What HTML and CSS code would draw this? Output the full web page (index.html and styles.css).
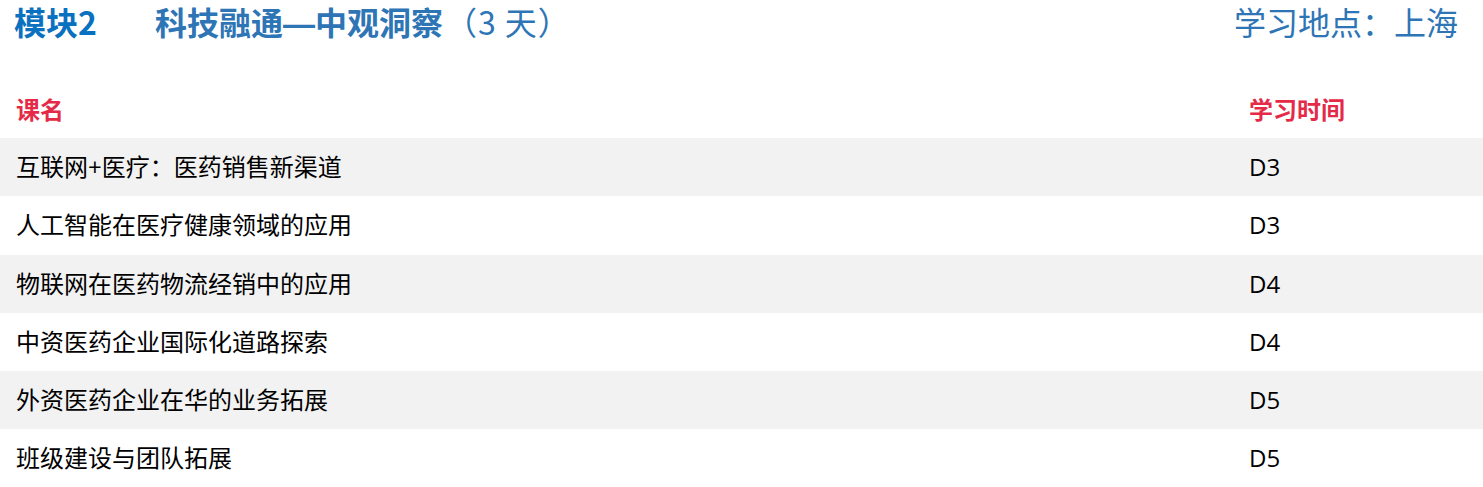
FILE: index.html
```html
<!DOCTYPE html>
<html lang="zh-CN">
<head>
<meta charset="utf-8">
<title>模块2 科技融通—中观洞察</title>
<link rel="stylesheet" href="styles.css">
</head>
<body>
<div class="page">
  <header class="title-bar">
    <div class="title-left">
      <span class="module">模块2</span>
      <span class="topic">科技融通<span class="dash">—</span>中观洞察<span class="days">（3 天）</span></span>
    </div>
    <div class="place">学习地点：上海</div>
  </header>
  <div class="table">
    <div class="row head">
      <div class="cell">课名</div>
      <div class="cell">学习时间</div>
    </div>
    <div class="row alt">
      <div class="cell">互联网+医疗：医药销售新渠道</div>
      <div class="cell">D3</div>
    </div>
    <div class="row">
      <div class="cell">人工智能在医疗健康领域的应用</div>
      <div class="cell">D3</div>
    </div>
    <div class="row alt">
      <div class="cell">物联网在医药物流经销中的应用</div>
      <div class="cell">D4</div>
    </div>
    <div class="row">
      <div class="cell">中资医药企业国际化道路探索</div>
      <div class="cell">D4</div>
    </div>
    <div class="row alt">
      <div class="cell">外资医药企业在华的业务拓展</div>
      <div class="cell">D5</div>
    </div>
    <div class="row">
      <div class="cell">班级建设与团队拓展</div>
      <div class="cell">D5</div>
    </div>
  </div>
</div>
</body>
</html>
```

FILE: styles.css
```css
html, body {
  margin: 0;
  padding: 0;
  background: #ffffff;
}

body {
  font-family: "Open Sans", "Noto Sans CJK SC", sans-serif;
  color: #000000;
}

.page {
  width: 1483px;
}

.title-bar {
  display: flex;
  justify-content: space-between;
  align-items: flex-start;
  height: 80px;
  padding: 0 25px 0 14px;
  box-sizing: border-box;
}

.title-left {
  display: flex;
  gap: 58px;
  font-size: 32px;
  line-height: 42px;
  font-family: "Noto Sans CJK SC", sans-serif;
}

.module {
  color: #0a70c0;
  font-weight: 700;
}

.topic {
  color: #2e75b6;
  font-weight: 700;
}

.dash {
  font-family: "Liberation Sans", sans-serif;
  font-weight: 700;
}

.days {
  font-weight: 400;
  margin-left: 2px;
  letter-spacing: 1px;
}

.place {
  color: #2e75b6;
  font-size: 32px;
  line-height: 42px;
  font-family: "Noto Sans CJK SC", sans-serif;
}

.table {
  display: flex;
  flex-direction: column;
}

.row {
  display: grid;
  grid-template-columns: 1233px 1fr;
  height: 58.25px;
  align-items: center;
  font-size: 24px;
}

.row.alt {
  background: #f2f2f2;
}

.cell {
  padding-left: 16px;
  line-height: 30px;
}

.row.head {
  height: 58px;
  color: #e42a47;
  font-weight: 700;
  font-family: "Noto Sans CJK SC", sans-serif;
}
```
